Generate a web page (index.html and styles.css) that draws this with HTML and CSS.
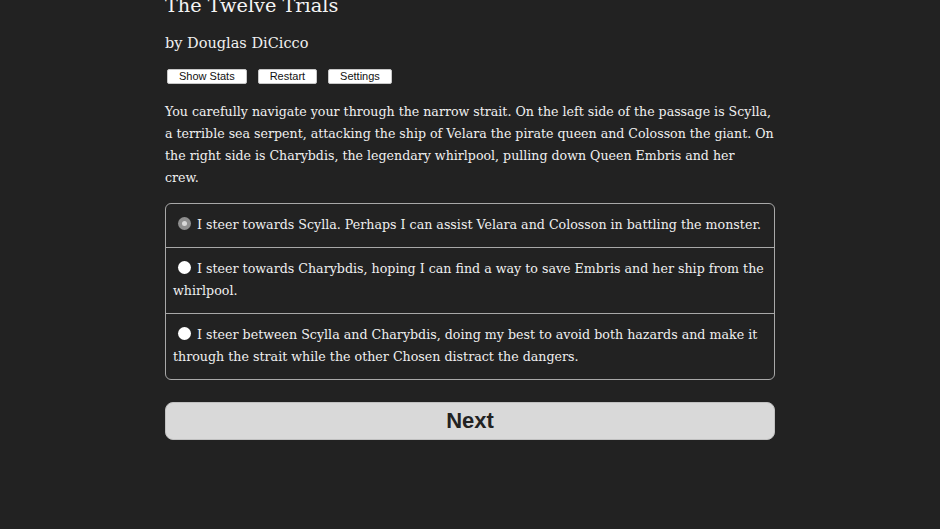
FILE: index.html
```html
<!DOCTYPE html>
<html>
<head>
<meta charset="utf-8">
<link rel="stylesheet" href="styles.css">
</head>
<body>
<div class="container">
  <h1 class="title">The Twelve Trials</h1>
  <h2 class="author">by Douglas DiCicco</h2>
  <div class="buttons">
    <button class="tool">Show Stats</button>
    <button class="tool">Restart</button>
    <button class="tool">Settings</button>
  </div>
  <p class="story">You carefully navigate your through the narrow strait. On the left side of the passage is Scylla, a terrible sea serpent, attacking the ship of Velara the pirate queen and Colosson the giant. On the right side is Charybdis, the legendary whirlpool, pulling down Queen Embris and her<br>crew.</p>
  <div class="choices">
    <label class="choice"><span class="radio checked"></span>I steer towards Scylla. Perhaps I can assist Velara and Colosson in battling the monster.</label>
    <label class="choice"><span class="radio"></span>I steer towards Charybdis, hoping I can find a way to save Embris and her ship from the whirlpool.</label>
    <label class="choice"><span class="radio"></span>I steer between Scylla and Charybdis, doing my best to avoid both hazards and make it through the strait while the other Chosen distract the dangers.</label>
  </div>
  <button class="next">Next</button>
</div>
</body>
</html>
```

FILE: styles.css
```css
html, body {
  margin: 0;
  padding: 0;
  background: #222222;
  height: 100%;
}
body {
  color: #f0f0f0;
  font-family: "DejaVu Serif", Georgia, serif;
  overflow: hidden;
}
.container {
  width: 610px;
  margin: -7px auto 0;
}
.title {
  font-size: 19.3px;
  font-weight: normal;
  margin: 0;
  line-height: 26px;
  color: #f4f4f4;
}
.author {
  font-size: 14.5px;
  font-weight: normal;
  margin: 13px 0 0;
  line-height: 22px;
}
.buttons {
  display: flex;
  gap: 11px;
  margin: 15px 0 0 2px;
}
.tool {
  font-family: "Liberation Sans", Arial, sans-serif;
  font-size: 11px;
  background: #ffffff;
  color: #111;
  border: 1px solid #c8c8c8;
  border-radius: 2px;
  padding: 0 11px;
  height: 15px;
  line-height: 13px;
}
.story {
  font-size: 12.6px;
  line-height: 22px;
  margin: 17px 0 0;
}
.choices {
  margin-top: 14px;
  border: 1px solid #a8a8a8;
  border-radius: 6px;
  overflow: hidden;
}
.choice {
  display: block;
  font-size: 12.65px;
  line-height: 22px;
  padding: 10px 8px 11px 7px;
  border-top: 1px solid #a8a8a8;
}
.choice:first-child {
  border-top: none;
}
.radio {
  display: inline-block;
  width: 13px;
  height: 13px;
  border-radius: 50%;
  background: #ffffff;
  margin: 0 6px 0 5px;
  vertical-align: -1px;
}
.radio.checked {
  background: #8f8f8f;
  position: relative;
}
.radio.checked::after {
  content: "";
  position: absolute;
  left: 4px;
  top: 4px;
  width: 5px;
  height: 5px;
  border-radius: 50%;
  background: #d8d8d8;
}
.next {
  display: block;
  width: 100%;
  margin-top: 22px;
  height: 38px;
  background: #d9d9d9;
  border: 1px solid #c0c0c0;
  border-radius: 8px;
  font-family: "Liberation Sans", Arial, sans-serif;
  font-weight: bold;
  font-size: 22px;
  color: #222;
}
```
